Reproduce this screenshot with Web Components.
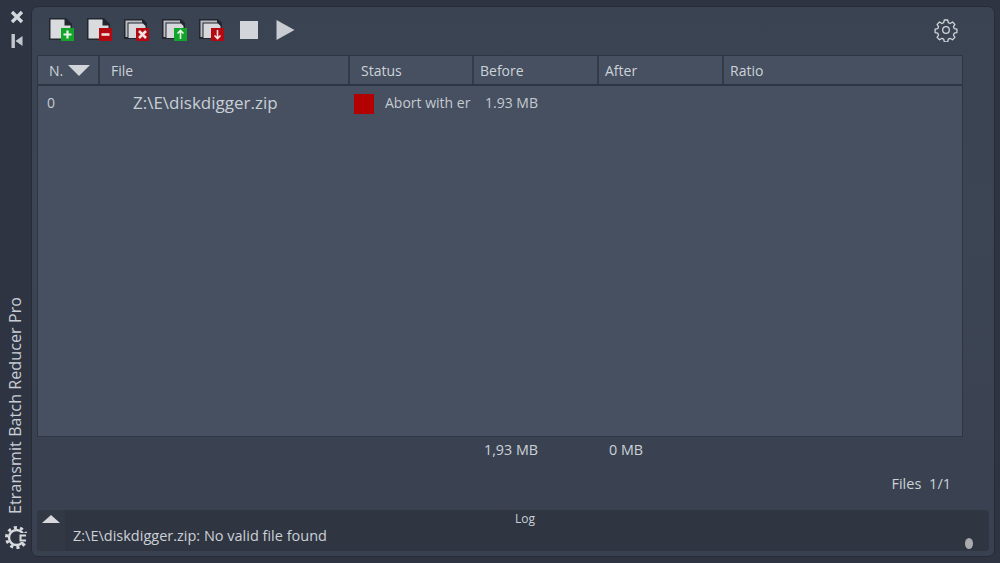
<!DOCTYPE html>
<html>
<head>
<meta charset="utf-8">
<style>
  html, body { margin: 0; height: 100%; background: #2e3441; }
  body { font-family: "Open Sans", "Noto Sans", sans-serif; color: #d5d9df; overflow: hidden; }
</style>
</head>
<body>
<app-window>
  <side-bar slot="side"></side-bar>
  <tool-bar></tool-bar>
  <file-table></file-table>
  <totals-row></totals-row>
  <log-panel>Z:\E\diskdigger.zip: No valid file found</log-panel>
</app-window>

<script>
class AppWindow extends HTMLElement {
  constructor() {
    super()
    this.attachShadow({ mode: 'open' }).innerHTML = `
      <style>
        :host { display: flex; width: 1000px; height: 563px; box-sizing: border-box; padding: 6px 5px 6px 0; background: #2e3441; }
        .panel {
          flex: 1; min-width: 0; display: flex; flex-direction: column;
          background: linear-gradient(#3a4352, #3c4554 40%, #394150);
          border: 1px solid #262b36; border-radius: 7px;
          padding: 0 5px 5px 5px;
        }
      </style>
      <slot name="side"></slot>
      <div class="panel"><slot></slot></div>
    `
  }
}

class SideBar extends HTMLElement {
  constructor() {
    super()
    this.attachShadow({ mode: 'open' }).innerHTML = `
      <style>
        :host { display: flex; flex-direction: column; align-items: center; width: 31px; flex: none; }
        .close { margin: 4px 0 0 3px; display: block; }
        .pin { margin: 10px 0 0 3px; display: block; }
        .title {
          margin-top: auto; margin-right: 2px; writing-mode: vertical-rl; transform: rotate(180deg);
          font-size: 16px; line-height: 20px; color: #c9ced6; white-space: nowrap; margin-bottom: 11px; letter-spacing: .1px;
        }
        .logo { display: block; margin-left: 2px; margin-bottom: 7px; }
      </style>
      <svg class="close" width="14" height="14" viewBox="0 0 14 14">
        <path d="M2 2 12 12M12 2 2 12" stroke="#d3d6db" stroke-width="3.400" fill="none"/>
      </svg>
      <svg class="pin" width="12" height="14" viewBox="0 0 12 14">
        <rect x="0.500" y="0" width="3.400" height="14" fill="#c4c8ce"/>
        <path d="M11.500 2V12L4.500 7Z" fill="#c4c8ce"/>
      </svg>
      <div class="title">Etransmit Batch Reducer Pro</div>
      <svg class="logo" width="24" height="25" viewBox="0 0 24 25">
        <circle cx="11.500" cy="12.500" r="7.500" fill="none" stroke="#d8dadd" stroke-width="2.400"/>
        <circle cx="11.500" cy="12.500" r="10" fill="none" stroke="#d8dadd" stroke-width="3" stroke-dasharray="3.100 3.200"/>
        <rect x="13" y="8" width="11" height="9" fill="#2e3441"/>
        <path d="M21 10.500H15.500V15.500H21" fill="none" stroke="#d8dadd" stroke-width="2"/>
      </svg>
    `
  }
}

class ToolIcon extends HTMLElement {
  constructor() {
    super()
    const kind = this.getAttribute('kind')
    const stacked = this.hasAttribute('stacked')
    const colour = this.getAttribute('tone') === 'green' ? '#12a52a' : '#b30a12'
    const page = stacked
      ? `<path d="M0 1H19L23 5V21H0Z" fill="#23262e"/>
         <path d="M1.500 2.500H18V4.500H3.500V19H1.500Z" fill="#b9bcc2"/>
         <path d="M4.500 5.500H19L21.500 8V20H4.500Z" fill="#d6d8dc"/>`
      : `<path d="M0 0H17L23 6V22H0Z" fill="#23262e"/>
         <path d="M1.500 1.500H15.500V7.500H21.500V20.500H1.500Z" fill="#d9dbde"/>`
    const marks = {
      add: '<path d="M18.500 12.500v8M14.500 16.500h8" stroke="#e6f3e6" stroke-width="2.200"/>',
      remove: '<path d="M14.500 16.500h8" stroke="#f2dcdc" stroke-width="2.600"/>',
      clear: '<path d="M15 13l7 7M22 13l-7 7" stroke="#f5e3e3" stroke-width="2.600"/>',
      up: '<path d="M18.500 21v-8M15.500 15.500l3-3 3 3" stroke="#e6f3e6" stroke-width="1.600" fill="none"/>',
      down: '<path d="M18.500 12v8M15.500 17.500l3 3 3-3" stroke="#f5e3e3" stroke-width="1.600" fill="none"/>'
    }
    this.attachShadow({ mode: 'open' }).innerHTML = `
      <style>:host { display: block; width: 26px; height: 24px; flex: none; } svg { display: block; }</style>
      <svg width="26" height="24" viewBox="0 0 26 24">
        ${page}
        <rect x="12" y="10" width="13" height="13" fill="${colour}"/>
        ${marks[kind]}
      </svg>
    `
  }
}

class ToolBar extends HTMLElement {
  constructor() {
    super()
    this.attachShadow({ mode: 'open' }).innerHTML = `
      <style>
        :host { display: flex; align-items: center; height: 48px; box-sizing: border-box; padding: 0 31px 2px 12px; flex: none; }
        .icons { display: flex; align-items: center; gap: 11.500px; }
        .stop { width: 18px; height: 18px; background: #d2d5da; margin-left: 3px; }
        svg { display: block; }
        .play { margin-left: 7px; }
        .gear { margin-left: auto; }
      </style>
      <div class="icons">
        <tool-icon kind="add" tone="green"></tool-icon>
        <tool-icon kind="remove" tone="red"></tool-icon>
        <tool-icon kind="clear" tone="red" stacked></tool-icon>
        <tool-icon kind="up" tone="green" stacked></tool-icon>
        <tool-icon kind="down" tone="red" stacked></tool-icon>
        <div class="stop"></div>
        <svg class="play" width="19" height="20" viewBox="0 0 18 20"><path d="M0 0 18 10 0 20Z" fill="#c9ccd2"/></svg>
      </div>
      <svg class="gear" width="24" height="24" viewBox="0 0 24 24" fill="none" stroke="#cfd3d9" stroke-width="1.300" stroke-linejoin="round">
        <circle cx="12" cy="12" r="3.300"/>
        <path d="M10.300 2h3.400l.6 2.700 1.800.8 2.400-1.500 2.400 2.400-1.500 2.400.8 1.800 2.700.6v3.400l-2.700.6-.8 1.800 1.500 2.400-2.400 2.400-2.400-1.500-1.800.8-.6 2.700h-3.400l-.6-2.700-1.800-.8-2.400 1.500-2.400-2.400 1.500-2.400-.8-1.800-2.700-.6v-3.400l2.700-.6.8-1.800-1.500-2.400 2.400-2.400 2.400 1.500 1.800-.8z"/>
      </svg>
    `
  }
}

class FileTable extends HTMLElement {
  constructor() {
    super()
    this.attachShadow({ mode: 'open' }).innerHTML = `
      <style>
        :host { display: flex; flex-direction: column; height: 382px; flex: none; background: #465060; border: 1px solid #2f3643; box-sizing: border-box; width: 926px; }
        .head { display: grid; grid-template-columns: 62px 250px 124px 125px 125px 1fr; height: 30px; box-sizing: border-box; border-bottom: 2px solid #2f3643; flex: none; }
        .head div { display: flex; align-items: center; font-size: 14px; color: #cdd2d9; padding-left: 11px; border-right: 2px solid #343b48; box-sizing: border-box; }
        .head div:last-child { border-right: 0; }
        .head .be, .head .af, .head .ra { padding-left: 6px; }
        .arrow { width: 0; height: 0; border-left: 11px solid transparent; border-right: 11px solid transparent; border-top: 11px solid #d2d5da; margin-left: 5px; }
        .row { display: grid; grid-template-columns: 62px 250px 124px 125px 125px 1fr; height: 32px; align-items: center; color: #c5cad2; font-size: 14px; }
        .num { padding-left: 9px; }
        .name { font-size: 17px; padding-left: 33px; color: #c9ced5; }
        .status { display: flex; align-items: center; padding-left: 4px; white-space: nowrap; height: 100%; }
        .sq { width: 20px; height: 20px; background: #b30000; flex: none; margin-right: 11px; margin-top: 4px; }
        .before { padding-left: 11px; }
      </style>
      <div class="head">
        <div class="n">N.<span class="arrow"></span></div>
        <div class="file">File</div>
        <div class="st">Status</div>
        <div class="be">Before</div>
        <div class="af">After</div>
        <div class="ra">Ratio</div>
      </div>
      <div class="row">
        <div class="num">0</div>
        <div class="name">Z:\\E\\diskdigger.zip</div>
        <div class="status"><span class="sq"></span>Abort with er</div>
        <div class="before">1.93 MB</div>
        <div></div>
        <div></div>
      </div>
    `
  }
}

class TotalsRow extends HTMLElement {
  constructor() {
    super()
    this.attachShadow({ mode: 'open' }).innerHTML = `
      <style>
        :host { display: block; height: 73px; flex: none; font-size: 14.300px; color: #ccd1d8; }
        .sum { display: grid; grid-template-columns: 447px 125px 1fr; height: 24px; align-items: center; }
        .files { display: flex; justify-content: flex-end; padding-right: 38px; margin-top: 13px; font-size: 14.500px; word-spacing: 4px; }
      </style>
      <div class="sum"><span></span><span>1,93 MB</span><span>0 MB</span></div>
      <div class="files">Files 1/1</div>
    `
  }
}

class LogPanel extends HTMLElement {
  constructor() {
    super()
    this.attachShadow({ mode: 'open' }).innerHTML = `
      <style>
        :host { display: grid; grid-template-columns: 28px 1fr; position: relative; width: 952px; height: 41px; background: #2f3541; border-radius: 4px; box-sizing: border-box; font-size: 14.500px; color: #ccd0d7; flex: none; overflow: hidden; }
        .toggle { background: #323945; padding: 5px 0 0 5px; box-sizing: border-box; }
        .up { width: 0; height: 0; border-left: 9px solid transparent; border-right: 9px solid transparent; border-bottom: 8px solid #d6d8dc; }
        .body { display: flex; flex-direction: column; }
        .cap { font-size: 12px; text-align: center; line-height: 16px; padding-top: 1px; padding-right: 4px; }
        .msg { padding-left: 8px; line-height: 19px; margin-top: -1px; }
        .thumb { position: absolute; right: 16px; bottom: 2px; width: 8px; height: 11px; border-radius: 50%; background: #a9abae; }
      </style>
      <div class="toggle"><div class="up"></div></div>
      <div class="body">
        <div class="cap">Log</div>
        <div class="msg"><slot></slot></div>
      </div>
      <div class="thumb"></div>
    `
  }
}

customElements.define('tool-icon', ToolIcon)
customElements.define('side-bar', SideBar)
customElements.define('tool-bar', ToolBar)
customElements.define('file-table', FileTable)
customElements.define('totals-row', TotalsRow)
customElements.define('log-panel', LogPanel)
customElements.define('app-window', AppWindow)
</script>
</body>
</html>
